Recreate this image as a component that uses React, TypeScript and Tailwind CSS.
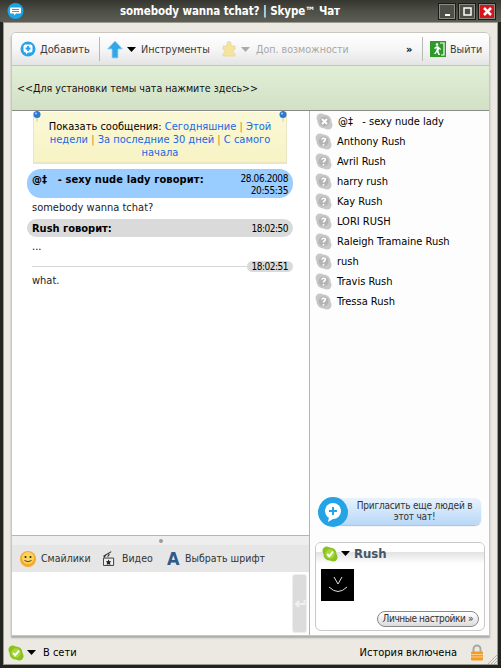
import React from "react";

const font: React.CSSProperties = { fontFamily: '"DejaVu Sans Condensed", "DejaVu Sans", sans-serif', fontStretch: "condensed" };

function Bubble({ size = 16, color = "#29a3e8", children }: { size?: number; color?: string; children?: React.ReactNode }) {
  return (
    <svg width={size} height={size} viewBox="0 0 16 16" className="shrink-0">
      <circle cx="8" cy="8" r="7.5" fill={color} />
      {children}
    </svg>
  );
}

function Status({ kind, size = 17 }: { kind: "q" | "x" | "ok"; size?: number }) {
  const fill = kind === "ok" ? "#8cc21f" : "#c8c8c8";
  return (
    <svg width={size} height={size} viewBox="0 0 17 17" className="shrink-0">
      <circle cx="5" cy="5" r="4.5" fill={fill} />
      <circle cx="12" cy="12" r="4.5" fill={fill} />
      <circle cx="8.5" cy="8.5" r="7" fill={fill} />
      <circle cx="8.5" cy="8.5" r="5" fill={kind === "ok" ? "#a5d83c" : "#b4b4b4"} />
      {kind === "ok" && <path d="M5.5 8.5l2.2 2.4 4-5" fill="none" stroke="#fff" strokeWidth="2" />}
      {kind === "q" && <path d="M6.8 6.6c.2-1.9 3.6-1.9 3.6 0 0 1.4-1.9 1.3-1.9 3M8.5 11v1.4" fill="none" stroke="#fff" strokeWidth="1.6" />}
      {kind === "x" && <path d="M6 6l5 5M11 6l-5 5" fill="none" stroke="#fff" strokeWidth="1.8" />}
    </svg>
  );
}

function Caret({ color = "#000" }: { color?: string }) {
  return (
    <svg width="9" height="5" viewBox="0 0 9 5" className="shrink-0 block">
      <path d="M0 0h9L4.5 5z" fill={color} />
    </svg>
  );
}

function WinBtn({ bg, children }: { bg: string; children: React.ReactNode }) {
  return (
    <div className={`w-[18px] h-[17px] flex items-center justify-center border border-[#1a1a18] outline outline-1 outline-[#8c8c84] -outline-offset-2 ${bg}`}>
      <svg width="11" height="11" viewBox="0 0 11 11">{children}</svg>
    </div>
  );
}

function Pin({ side }: { side: "l" | "r" }) {
  return (
    <svg width="8" height="11" viewBox="0 0 8 11" className={side === "l" ? "absolute left-[-1px] top-[-1px]" : "absolute right-[-1px] top-[-1px]"}>
      <path d="M3 6h2l-.5 5h-1z" fill="#d8d8c8" />
      <circle cx="4" cy="3.500" r="3.500" fill="#2f78d0" />
      <circle cx="3" cy="2.500" r="1" fill="#a9d0f5" />
    </svg>
  );
}

const people = ["Anthony Rush", "Avril Rush", "harry rush", "Kay Rush", "LORI RUSH", "Raleigh Tramaine Rush", "rush", "Travis Rush", "Tressa Rush"];

const linkCls = "text-[#1c66e4]";
const sepCls = "text-[#c8862a]";

export default function App() {
  return (
    <div style={font} className="w-[501px] h-[668px] overflow-hidden flex flex-col bg-[#23241f] text-[11px] leading-[13px] text-black">
      {/* Title bar */}
      <div className="relative h-[22px] shrink-0 flex items-center bg-gradient-to-b from-[#34362f] via-[#4d4f47] to-[#5c5e55] pl-[7px] pr-[5px]">
        <svg width="17" height="17" viewBox="0 0 17 17" className="shrink-0">
          <circle cx="8.5" cy="8" r="8" fill="#19a5ea" />
          <path d="M4 4.5h9a1 1 0 0 1 1 1v4a1 1 0 0 1-1 1H9l-2 2v-2H4a1 1 0 0 1-1-1v-4a1 1 0 0 1 1-1z" fill="#fff" />
          <path d="M5 6.5h7M5 8.500h7" stroke="#19a5ea" strokeWidth="1" />
        </svg>
        <div className="flex-1 text-white font-bold text-[11.5px] tracking-[-0.1px] whitespace-nowrap pl-[96px]">somebody wanna tchat? | Skype™ Чат</div>
        <div className="flex gap-[2px]">
          <WinBtn bg="bg-[#4e5048]"><path d="M3 8h5v2H3z" fill="#fff" /></WinBtn>
          <WinBtn bg="bg-[#4e5048]"><path d="M2 2h7v7H2z" fill="none" stroke="#fff" strokeWidth="1.500" /></WinBtn>
          <WinBtn bg="bg-[#d8131c]"><path d="M2 2l7 7M9 2L2 9" stroke="#fff" strokeWidth="2.500" /></WinBtn>
        </div>
      </div>

      {/* Window body */}
      <div className="flex-1 min-h-0 mx-[3px] mb-[3px] border border-[#9a9a90] bg-[#ece9e2] flex flex-col">
        <div className="flex-1 min-h-0 mx-[7px] mt-[9px] mb-[5px] rounded-t-[5px] border border-[#c9c7c0] bg-white flex flex-col overflow-hidden shadow-[0_2px_2px_#aaa]">
          {/* Toolbar */}
          <div className="h-[33px] shrink-0 flex items-center bg-gradient-to-b from-white via-[#f6f6f6] to-[#e4e4e4] border-b border-[#c4c4c8] pl-[8px] text-[#3b3b3b]">
            <Bubble>
              <path d="M3.500 5.500a2 2 0 0 1 2-2h5a2 2 0 0 1 2 2v4a2 2 0 0 1-2 2H8l-2 2v-2a2.500 2.500 0 0 1-2.500-2.500z" fill="#fff" />
              <path d="M8 5v5M5.500 7.500h5" stroke="#29a3e8" strokeWidth="1.800" />
            </Bubble>
            <span className="ml-[4px] w-[51px] whitespace-nowrap">Добавить</span>
            <div className="w-px h-[24px] bg-[#b8b8b8] ml-[8px]" />
            <svg width="16" height="19" viewBox="0 0 16 19" className="ml-[7px] shrink-0">
              <path d="M8 1l7.500 8H11v9H5V9H.5z" fill="#35a5ea" stroke="#9fd6f6" strokeWidth=".8" />
            </svg>
            <span className="ml-[4px]"><Caret /></span>
            <span className="ml-[5px] w-[69px] text-[10.7px] whitespace-nowrap">Инструменты</span>
            <svg width="16" height="16" viewBox="0 0 16 16" className="ml-[11px] shrink-0">
              <path d="M2 5h4V2.500a2 2 0 0 1 4 0V5h4v3.500a2 2 0 0 0 0 4V15H2v-2.500a2 2 0 0 0 0-4z" fill="#f5e49a" stroke="#e8d9a8" />
            </svg>
            <span className="ml-[4px]"><Caret color="#aaa" /></span>
            <span className="ml-[6px] w-[93px] text-[10.6px] whitespace-nowrap text-[#a8a8a8]">Доп. возможности</span>
            <span className="ml-[57px] w-[8px] font-bold text-black text-[11px]">»</span>
            <div className="w-px h-[24px] bg-[#b8b8b8] ml-[8px]" />
            <svg width="16" height="16" viewBox="0 0 16 16" className="ml-[7px] shrink-0">
              <rect width="16" height="16" fill="#2f9a2a" />
              <path d="M10 2h4v12h-3" fill="none" stroke="#fff" strokeWidth="1.200" />
              <circle cx="7" cy="3.500" r="1.300" fill="#fff" />
              <path d="M7 5l-3 2 1 1 2-1-1 3-2 3h1.500L7 11l1.500 3H10L8.500 10l.5-2 1.500 1 .5-1-2.500-2.500z" fill="#fff" />
            </svg>
            <span className="ml-[4px] text-[10.7px] whitespace-nowrap">Выйти</span>
          </div>
          {/* Topic band */}
          <div className="h-[45px] shrink-0 flex items-center bg-gradient-to-b from-[#e1efd7] to-[#d2e0c6] border-b border-[#8a8a88] pl-[5px] text-[#111] text-[10.6px]">
            &lt;&lt;Для установки темы чата нажмите здесь&gt;&gt;
          </div>

          <div className="flex-1 min-h-0 flex">
            {/* Left column */}
            <div className="w-[298px] shrink-0 flex flex-col border-r border-[#b5b5b0]">
              <div className="flex-1 min-h-0 pl-[15px] pr-[16px] pt-[1px]">
                <div className="relative mx-[6px] h-[52px] bg-gradient-to-b from-[#fbf8d8] to-[#f7f3c4] border-x border-b-2 border-[#e8e6c4] text-center pt-[8px] leading-[13px] whitespace-nowrap">
                  <div>Показать сообщения: <a className={linkCls}>Сегодняшние</a> <span className={sepCls}>|</span> <a className={linkCls}>Этой</a></div>
                  <div><a className={linkCls}>недели</a> <span className={sepCls}>|</span> <a className={linkCls}>За последние 30 дней</a> <span className={sepCls}>|</span> <a className={linkCls}>С самого</a></div>
                  <div><a className={linkCls}>начала</a></div>
                  <Pin side="l" />
                  <Pin side="r" />
                </div>
                <div className="mt-[5px] flex justify-between items-start h-[29px] rounded-[14px] bg-[#99ccff] pl-[5px] pr-[5px] pt-[4px]">
                  <b className="tracking-[0.1px]">@‡&nbsp;&nbsp; - sexy nude lady говорит:</b>
                  <span className="text-right text-[10px] tracking-[-0.4px] leading-[12px]">28.06.2008<br />20:55:35</span>
                </div>
                <div className="pl-[5px] h-[19px] leading-[19px] text-[#222]">somebody wanna tchat?</div>
                <div className="mt-[2px] flex justify-between items-center h-[18px] rounded-[9px] bg-[#dadada] px-[5px]">
                  <b>Rush говорит:</b>
                  <span className="text-[10px] tracking-[-0.5px]">18:02:50</span>
                </div>
                <div className="pl-[5px] h-[21px] leading-[19px]">...</div>
                <div className="mt-[3px] flex items-center pl-[5px] h-[11px]">
                  <div className="flex-1 h-px bg-[#d8d8d8]" />
                  <span className="h-[11px] rounded-[6px] bg-[#dadada] px-[5px] text-[10px] tracking-[-0.5px] leading-[11px]">18:02:51</span>
                </div>
                <div className="pl-[5px] mt-[1px] h-[17px] leading-[16px] text-[#222]">what.</div>
              </div>
              <div className="h-[10px] shrink-0 flex items-center justify-center border-t border-[#b5b5b5] bg-[#eeeeee]">
                <span className="w-[4px] h-[4px] rounded-full bg-[#9a9a9a]" />
              </div>
              <div className="h-[27px] shrink-0 flex items-center bg-[#e6e6e6] pl-[8px] text-[#333] text-[10.5px]">
                <svg width="16" height="16" viewBox="0 0 16 16" className="shrink-0">
                  <circle cx="8" cy="8" r="8" fill="#f8a92c" />
                  <circle cx="8" cy="7" r="6" fill="#fbd45a" />
                  <circle cx="5.500" cy="6" r="1" fill="#222" />
                  <circle cx="10.500" cy="6" r="1" fill="#222" />
                  <path d="M4.500 9.500q3.500 2.500 7 0" fill="none" stroke="#333" strokeWidth=".9" />
                </svg>
                <span className="ml-[5px] w-[48px] whitespace-nowrap">Смайлики</span>
                <svg width="12" height="16" viewBox="0 0 13 17" className="ml-[14px] shrink-0">
                  <path d="M.5 7.500h11v8H.5z" fill="#eee" stroke="#333" />
                  <path d="M.5 5.500L9 .5M1 7l2-3M5 6l2-3" stroke="#333" strokeWidth="1.200" />
                  <path d="M6 9l1 2h2l-1.500 1.500L8 15l-2-1.200L4 15l.5-2.500L3 11h2z" fill="#222" />
                </svg>
                <span className="ml-[7px] w-[32px] whitespace-nowrap">Видео</span>
                <span className="ml-[13px] w-[12px] text-[#2e5a88] font-bold text-[18px] leading-[18px]">A</span>
                <span className="ml-[6px] whitespace-nowrap">Выбрать шрифт</span>
              </div>
              <div className="h-[63px] shrink-0 flex justify-end pt-[2px] pr-[2px]">
                <div className="w-[15px] h-[59px] rounded-[3px] bg-[#dcdcdc] border border-[#eeeeee] flex items-center justify-center">
                  <svg width="12" height="10" viewBox="0 0 12 10">
                    <path d="M10.500 1v4H2M5 2L2 5l3 3" fill="none" stroke="#f0f0f0" strokeWidth="2" />
                  </svg>
                </div>
              </div>
            </div>

            {/* Right column */}
            <div className="flex-1 min-w-0 flex flex-col bg-[#fdfdfd] pb-[4px]">
              <div className="flex-1 min-h-0 pl-[5px]">
                <div className="flex items-center h-[20px] gap-[5px] pl-[1px]">
                  <Status kind="x" />
                  <span>@‡&nbsp;&nbsp; - sexy nude lady</span>
                </div>
                {people.map((p) => (
                  <div key={p} className="flex items-center h-[20px] gap-[5px]">
                    <Status kind="q" />
                    <span>{p}</span>
                  </div>
                ))}
              </div>
              <div className="relative ml-[26px] mr-[8px] h-[27px] rounded-[6px] bg-gradient-to-b from-[#e8f2fd] to-[#b9d8f8] pl-[16px] pr-[4px] text-center text-[10px] tracking-[-0.2px] leading-[11px] text-[#333] shrink-0 shadow-[0_1px_1px_#bbb]">
                <span className="block pt-[2px]">Пригласить еще людей в этот чат!</span>
                <svg width="30" height="30" viewBox="0 0 30 30" className="absolute left-[-18px] top-[-1px]">
                  <circle cx="15" cy="15" r="15" fill="#25a3e5" />
                  <circle cx="15" cy="14" r="8" fill="#fff" />
                  <path d="M11 20l-1 5 5-3z" fill="#fff" />
                  <path d="M15 10v8M11 14h8" stroke="#25a3e5" strokeWidth="2" />
                </svg>
              </div>
              <div className="mt-[17px] ml-[5px] mr-[4px] h-[89px] shrink-0 rounded-[6px] border border-[#c8c8c8] overflow-hidden bg-white relative">
                <div className="h-[21px] flex items-center pl-[6px] bg-[linear-gradient(to_bottom,#fff_0,#fff_43%,#e2e2e2_43%,#fff_100%)]">
                  <Status kind="ok" size={16} />
                  <span className="ml-[3px]"><Caret /></span>
                  <span className="ml-[4px] font-bold text-[13px] text-[#44566a]">Rush</span>
                </div>
                <div className="ml-[5px] mt-[5px] w-[33px] h-[32px] bg-black flex items-center justify-center">
                  <svg width="24" height="24" viewBox="0 0 24 24">
                    <path d="M8 4l4 7 4-7M3 14q9 9 18 0" fill="none" stroke="#ddd" strokeWidth="1" />
                  </svg>
                </div>
                <div className="absolute right-[5px] bottom-[3px] h-[16px] rounded-[8px] border border-[#8a8a8a] bg-gradient-to-b from-white to-[#dcdcdc] px-[5px] text-[10px] tracking-[-0.4px] leading-[14px] text-[#333] whitespace-nowrap">Личные настройки »</div>
              </div>
            </div>
          </div>
        </div>
        {/* Status bar */}
        <div className="h-[23px] shrink-0 flex items-center pl-[4px] pr-[13px] relative">
          <Status kind="ok" size={16} />
          <span className="ml-[3px]"><Caret /></span>
          <span className="ml-[7px]">В сети</span>
          <span className="ml-auto">История включена</span>
          <svg width="14" height="17" viewBox="0 0 14 17" className="ml-[13px] shrink-0">
            <path d="M3.500 8V5a3.500 3.500 0 0 1 7 0v3" fill="none" stroke="#a8a8a8" strokeWidth="2" />
            <rect x="1" y="7.500" width="12" height="9" rx="1" fill="#f59b25" />
            <path d="M1 10.500h12M1 13h12" stroke="#fcd08a" strokeWidth="1" />
          </svg>
          <svg width="10" height="10" viewBox="0 0 10 10" className="absolute right-0 bottom-0">
            <path d="M10 1L1 10M10 4L4 10M10 7L7 10" stroke="#b5b3aa" strokeWidth="1" />
          </svg>
        </div>
      </div>
    </div>
  );
}
